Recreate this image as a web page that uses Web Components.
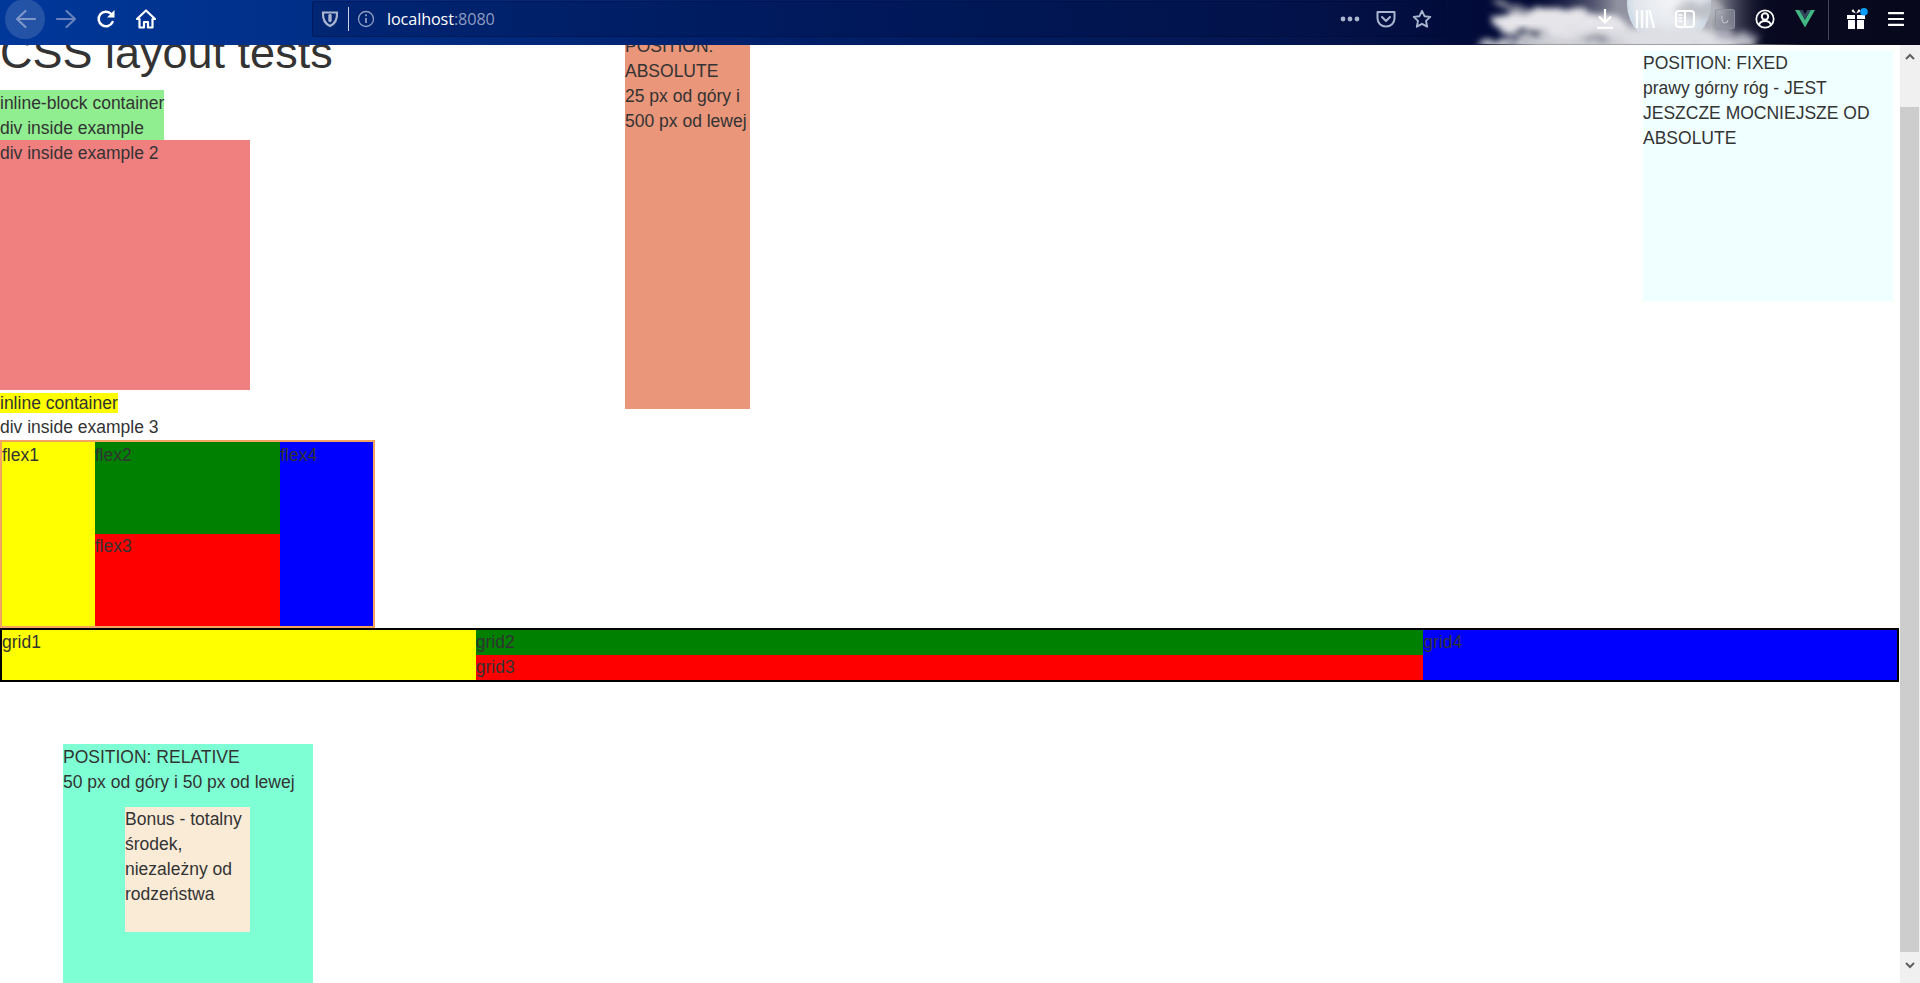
<!DOCTYPE html>
<html lang="pl">
<head>
<meta charset="utf-8">
<title>CSS layout tests</title>
<style>
  html, body { margin: 0; height: 100%; overflow: hidden; background: #fff; }
  body { font-family: "Liberation Sans", Arial, sans-serif; font-size: 17.5px; line-height: 25px; color: #333; }
</style>
</head>
<body>
<browser-window>
  <browser-toolbar></browser-toolbar>
  <page-view>
    <h1 slot="title">CSS layout tests</h1>
    <block-examples></block-examples>
    <flex-example></flex-example>
    <grid-example></grid-example>
    <relative-example></relative-example>
    <pos-box left="625" top="-11" width="125" height="375" color="#e9967a">POSITION: ABSOLUTE<br>25 px od góry i 500 px od lewej</pos-box>
    <pos-box right="7" top="6" width="250" height="250" color="#f0ffff">POSITION: FIXED<br>prawy górny róg - JEST JESZCZE MOCNIEJSZE OD ABSOLUTE</pos-box>
  </page-view>
</browser-window>

<script>
class BrowserWindow extends HTMLElement {
  constructor() {
    super();
    this.attachShadow({ mode: "open" }).innerHTML = `
      <style>
        :host { display: flex; flex-direction: column; height: 983px; overflow: hidden; }
      </style>
      <slot></slot>
    `;
  }
}

class ToolButton extends HTMLElement {
  constructor() {
    super();
    this.attachShadow({ mode: "open" }).innerHTML = `
      <style>
        :host { display: flex; align-items: center; justify-content: center; width: 40px; height: 38px; flex: none; }
        ::slotted(svg) { display: block; }
      </style>
      <slot></slot>
    `;
  }
}

class AddressBar extends HTMLElement {
  constructor() {
    super();
    this.attachShadow({ mode: "open" }).innerHTML = `
      <style>
        :host { display: flex; align-items: center; width: 1133px; height: 36px; margin: 1px 0 0 0; box-sizing: border-box;
          padding: 0 12px 0 7px; background: rgba(0, 10, 60, .25); border: 1px solid rgba(0, 10, 50, .35); border-radius: 2px;
          font: 16.2px/36px "Open Sans", sans-serif; letter-spacing: -.1px; color: #fff; }
        .sep { width: 1px; height: 24px; background: #c9d3e6; margin: 0 8px 0 8px; }
        .url { margin-left: 12px; flex: 1; }
        .port { color: #8d9cc0; }
        .actions { display: flex; align-items: center; gap: 16px; }
        svg { display: block; }
      </style>
      <svg width="20" height="20" viewBox="0 0 20 20" fill="none" stroke="#a9b5cf" stroke-width="2.2"><path d="M3 3.500c4.500 0 9.500 0 14 0 .4 6.500-1.500 11-7 13.500C4.500 14.500 2.600 10 3 3.500z"/><path d="M10 6.500v5" stroke-width="3.400" stroke-linecap="round"/></svg>
      <div class="sep"></div>
      <svg width="18" height="18" viewBox="0 0 18 18" fill="none" stroke="#8d9cc0" stroke-width="1.300"><circle cx="9" cy="9" r="7.500"/><path d="M9 8v5" stroke-width="1.800"/><circle cx="9" cy="5.300" r="1.100" fill="#8d9cc0" stroke="none"/></svg>
      <div class="url">localhost<span class="port">:8080</span></div>
      <div class="actions">
        <svg width="20" height="6" viewBox="0 0 20 6" fill="#a9b5cf"><circle cx="3" cy="3" r="2.400"/><circle cx="10" cy="3" r="2.400"/><circle cx="17" cy="3" r="2.400"/></svg>
        <svg width="20" height="20" viewBox="0 0 20 20" fill="none" stroke="#a9b5cf" stroke-width="2"><path d="M1.500 3h17v6.500a8.500 8 0 0 1-17 0z" stroke-linejoin="round"/><path d="M6 8l4 4 4-4" stroke-linecap="round" stroke-linejoin="round"/></svg>
        <svg width="20" height="20" viewBox="0 0 20 20" fill="none" stroke="#a9b5cf" stroke-width="1.900" stroke-linejoin="round"><path d="M10 1.800l2.500 5.400 5.800.7-4.300 4 1.200 5.800-5.200-2.900-5.200 2.900 1.200-5.800-4.300-4 5.800-.7z"/></svg>
      </div>
    `;
  }
}

class BrowserToolbar extends HTMLElement {
  constructor() {
    super();
    this.attachShadow({ mode: "open" }).innerHTML = `
      <style>
        :host { display: block; position: relative; flex: none; height: 45px; overflow: hidden;
          background: linear-gradient(90deg, #00389a 0, #002f88 300px, #001f68 800px, #04154e 1300px, #020b38 1480px, #08081f 1800px, #08081c 100%); }
        .sky { position: absolute; left: 1460px; top: 0; }
        .row { position: relative; display: flex; height: 44px; padding-left: 6px; box-sizing: border-box; }
        .nav { display: flex; width: 306px; flex: none; }
        .right { display: flex; margin-left: auto; padding-right: 4px; }
        .divider { width: 1px; height: 40px; background: rgba(255, 255, 255, .25); margin: 0 7px 0 3px; flex: none; }
        .back { position: relative; }
        .back::before { content: ""; position: absolute; left: -1px; top: -1px; width: 40px; height: 40px; border-radius: 50%; background: rgba(255, 255, 255, .14); }
        .back svg { position: relative; }
        .line { position: absolute; left: 1470px; width: 340px; bottom: 0; height: 1px; background: linear-gradient(90deg, transparent, #a0a0a6 20%, #a0a0a6 75%, transparent); }
      </style>
      <svg class="sky" width="340" height="44" viewBox="0 0 340 44">
        <defs>
          <filter id="puff" x="-30%" y="-60%" width="160%" height="220%">
            <feTurbulence type="fractalNoise" baseFrequency=".07 .13" numOctaves="4" seed="7"/>
            <feDisplacementMap in="SourceGraphic" scale="18"/>
            <feGaussianBlur stdDeviation="3"/>
          </filter>
          <radialGradient id="moon" cx=".5" cy=".45" r=".55">
            <stop offset="0" stop-color="#f2f3f5"/><stop offset=".75" stop-color="#e2e6ec"/><stop offset="1" stop-color="#c4d4e4"/>
          </radialGradient>
          <linearGradient id="fade" x1="0" x2="340" y1="0" y2="0" gradientUnits="userSpaceOnUse">
            <stop offset=".2" stop-color="#10163f" stop-opacity="0"/>
            <stop offset=".46" stop-color="#8f909f"/>
            <stop offset=".74" stop-color="#aaabb3"/>
            <stop offset=".92" stop-color="#0a0a22" stop-opacity="0"/>
          </linearGradient>
        </defs>
        <rect x="0" y="0" width="340" height="44" fill="url(#fade)"/>
        <circle cx="209" cy="4" r="42" fill="url(#moon)"/>
        <g filter="url(#puff)">
          <ellipse cx="62" cy="10" rx="32" ry="5" fill="#a0a1ad" opacity=".8" transform="rotate(18 62 10)"/>
          <ellipse cx="100" cy="24" rx="66" ry="14" fill="#e6e6ea"/>
          <ellipse cx="165" cy="37" rx="62" ry="11" fill="#dcdce2"/>
          <ellipse cx="130" cy="44" rx="115" ry="8" fill="#cfd0d6"/>
          <ellipse cx="228" cy="40" rx="66" ry="12" fill="#dedfe4"/>
          <ellipse cx="240" cy="10" rx="24" ry="10" fill="#b8b9c1" opacity=".8"/>
          <ellipse cx="276" cy="36" rx="24" ry="6" fill="#85869a" opacity=".6"/>
        </g>
        <g filter="url(#puff)">
          <ellipse cx="72" cy="34" rx="16" ry="3" fill="#2a2e48"/>
          <ellipse cx="135" cy="39" rx="14" ry="3" fill="#8a8b98"/>
        </g>
      </svg>
      <div class="line"></div>
      <div class="row">
        <div class="nav">
          <tool-button class="back"><svg width="22" height="22" viewBox="0 0 22 22" fill="none" stroke="#7f96c8" stroke-width="2.200" stroke-linecap="round" stroke-linejoin="round"><path d="M20 11H2M10.500 3 2 11l8.500 8"/></svg></tool-button>
          <tool-button><svg width="22" height="22" viewBox="0 0 22 22" fill="none" stroke="#6781bb" stroke-width="2.200" stroke-linecap="round" stroke-linejoin="round"><path d="M2 11h18M11.500 3 20 11l-8.500 8"/></svg></tool-button>
          <tool-button><svg width="20" height="20" viewBox="0 0 20 20" fill="none" stroke="#fff" stroke-width="2.500"><path d="M16.600 13a7.300 7.300 0 1 1-1.300-8" stroke-linecap="round"/><path d="M18.500 1v7.500H11z" fill="#fff" stroke="none"/></svg></tool-button>
          <tool-button><svg width="20" height="20" viewBox="0 0 20 20" fill="none" stroke="#fff" stroke-width="2.200" stroke-linejoin="round"><path d="M1 10 10 1.500 19 10h-2.500v8.500h-4.500v-5.500h-4v5.500H3.500V10z"/></svg></tool-button>
        </div>
        <address-bar></address-bar>
        <div class="right">
          <tool-button><svg width="18" height="20" viewBox="0 0 18 20" fill="none" stroke="#fff" stroke-width="2.200"><path d="M9 0v13M3 7.500l6 6 6-6"/><path d="M1 18.800h16"/></svg></tool-button>
          <tool-button><svg width="20" height="18" viewBox="0 0 20 18" fill="none" stroke="#fff" stroke-width="2.300"><path d="M2 0v18M7 0v18M12 0v18M14.500 0l4.500 18" stroke-opacity=".92"/></svg></tool-button>
          <tool-button><svg width="20" height="18" viewBox="0 0 20 18" fill="none" stroke="#fff" stroke-width="2"><rect x="1" y="1" width="18" height="16" rx="3"/><path d="M10 1v16"/><path d="M3.500 5h4M3.500 8h4M3.500 11h4" stroke-width="1.500"/></svg></tool-button>
          <tool-button><svg width="20" height="20" viewBox="0 0 20 20" fill="#a0a2ad" fill-opacity=".55" stroke="#8f93a0" stroke-width="1"><rect x=".5" y=".5" width="19" height="19" rx="2"/><path d="M7 7v4a3 3 0 0 0 6 0" fill="none" stroke="#c8c9d0"/></svg></tool-button>
          <tool-button><svg width="20" height="20" viewBox="0 0 20 20" fill="none" stroke="#fff" stroke-width="1.700"><circle cx="10" cy="10" r="8.700"/><circle cx="10" cy="7.500" r="3.200" stroke-width="2"/><path d="M4 16c1-3.500 3-4 6-4s5 .5 6 4" stroke-width="2"/></svg></tool-button>
          <tool-button><svg width="20" height="18" viewBox="0 0 20 18"><path d="M0 0h4.400L10 9.800 15.600 0H20L10 17.500z" fill="#41b883"/><path d="M4.400 0h3.200L10 4.200 12.400 0h3.200L10 9.800z" fill="#35495e"/></svg></tool-button>
          <div class="divider"></div>
          <tool-button><svg width="24" height="22" viewBox="0 0 24 22" fill="#fff"><path d="M3 7h8v4H3zM13 7h8v4h-8zM4 12h7v9H4zM13 12h7v9h-7z"/><path d="M11.800 6 8.500 4.500c-1.500-1-.6-3 1-2.500zM12.200 6l3.300-1.500c1.500-1 .6-3-1-2.500z" transform="translate(0 -.5)"/><circle cx="20" cy="3.800" r="3.800" fill="#0a9dff"/></svg></tool-button>
          <tool-button><svg width="16" height="14" viewBox="0 0 16 14" fill="#fff"><rect width="16" height="2.200" rx=".6"/><rect y="5.900" width="16" height="2.200" rx=".6"/><rect y="11.800" width="16" height="2.200" rx=".6"/></svg></tool-button>
        </div>
      </div>
    `;
  }
}

class PageView extends HTMLElement {
  constructor() {
    super();
    this.attachShadow({ mode: "open" }).innerHTML = `
      <style>
        :host { display: flex; flex: 1; min-height: 0; }
        .doc { position: relative; flex: 1; min-width: 0; overflow: hidden; background: #fff; }
        ::slotted(h1) { margin: -21px 0 0; height: 66px; font-size: 45px; line-height: 57px; font-weight: 400; color: #333; white-space: nowrap; }
      </style>
      <div class="doc">
        <slot name="title"></slot>
        <slot></slot>
      </div>
      <fake-scrollbar></fake-scrollbar>
    `;
  }
}

class FakeScrollbar extends HTMLElement {
  constructor() {
    super();
    this.attachShadow({ mode: "open" }).innerHTML = `
      <style>
        :host { display: flex; flex-direction: column; width: 20px; flex: none; background: #f0f0f0; }
        .btn { height: 17px; display: flex; align-items: center; justify-content: center; padding-top: 3px; }
        .track { flex: 1; display: flex; padding-top: 42px; }
        .thumb { flex: 1; margin-right: 1px; background: #cdcdcd; }
        .end { height: 31px; flex: none; display: flex; align-items: flex-start; justify-content: center; padding-top: 10px; box-sizing: border-box; }
      </style>
      <div class="btn"><svg width="10" height="7" viewBox="0 0 10 7" fill="none" stroke="#606060" stroke-width="2"><path d="M1 6l4-4 4 4"/></svg></div>
      <div class="track"><div class="thumb"></div></div>
      <div class="end"><svg width="10" height="7" viewBox="0 0 10 7" fill="none" stroke="#606060" stroke-width="2"><path d="M1 1l4 4 4-4"/></svg></div>
    `;
  }
}

class BlockExamples extends HTMLElement {
  constructor() {
    super();
    this.attachShadow({ mode: "open" }).innerHTML = `
      <style>
        :host { display: block; }
        .green { width: fit-content; height: 50px; box-sizing: border-box; padding-top: 1px; background: #90ee90; }
        .coral { width: 250px; height: 250px; box-sizing: border-box; padding-top: 1px; background: #f08080; }
        .line { height: 25px; box-sizing: border-box; padding-top: 1px; }
        .inline { background: #ffff00; }
      </style>
      <div class="green">inline-block container<div>div inside example</div></div>
      <div class="coral">div inside example 2</div>
      <div class="line"><span class="inline">inline container</span></div>
      <div>div inside example 3</div>
    `;
  }
}

class FlexExample extends HTMLElement {
  constructor() {
    super();
    this.attachShadow({ mode: "open" }).innerHTML = `
      <style>
        :host { display: flex; width: 375px; height: 188px; box-sizing: border-box; border: 2px solid #f4a460; }
        .side { flex: 1; padding-top: 1px; }
        .mid { flex: 2; display: flex; flex-direction: column; }
        .mid div { flex: 1; }
        .mid .first { padding-top: 1px; margin-bottom: -1px; }
      </style>
      <div class="side" style="background:#ff0">flex1</div>
      <div class="mid">
        <div class="first" style="background:#008000">flex2</div>
        <div style="background:#f00">flex3</div>
      </div>
      <div class="side" style="background:#00f">flex4</div>
    `;
  }
}

class GridExample extends HTMLElement {
  constructor() {
    super();
    this.attachShadow({ mode: "open" }).innerHTML = `
      <style>
        :host { display: grid; grid-template-columns: 1fr 2fr 1fr; grid-template-rows: 25px 25px; width: 1899px; box-sizing: border-box; border: 2px solid #000; }
        .tall { grid-row: span 2; }
      </style>
      <div class="tall" style="background:#ff0">grid1</div>
      <div style="background:#008000">grid2</div>
      <div class="tall" style="background:#00f">grid4</div>
      <div style="background:#f00">grid3</div>
    `;
  }
}

class RelativeExample extends HTMLElement {
  constructor() {
    super();
    this.attachShadow({ mode: "open" }).innerHTML = `
      <style>
        :host { display: block; position: relative; width: 250px; height: 250px; box-sizing: border-box; padding-top: 1px; margin: 62px 0 0 63px; background: #7fffd4; }
        .center { position: absolute; left: 62px; top: 63px; width: 125px; height: 125px; background: #faebd7; }
      </style>
      POSITION: RELATIVE<br>50 px od góry i 50 px od lewej
      <div class="center">Bonus - totalny środek, niezależny od rodzeństwa</div>
    `;
  }
}

class PosBox extends HTMLElement {
  constructor() {
    super();
    this.attachShadow({ mode: "open" }).innerHTML = `
      <style>
        :host { display: block; position: absolute; background: var(--box-color); }
      </style>
      <slot></slot>
    `;
  }

  connectedCallback() {
    for (const side of ["left", "right", "top", "width", "height"]) {
      if (this.hasAttribute(side)) this.style[side] = this.getAttribute(side) + "px";
    }
    this.style.setProperty("--box-color", this.getAttribute("color"));
  }
}

customElements.define("browser-window", BrowserWindow);
customElements.define("tool-button", ToolButton);
customElements.define("address-bar", AddressBar);
customElements.define("browser-toolbar", BrowserToolbar);
customElements.define("fake-scrollbar", FakeScrollbar);
customElements.define("page-view", PageView);
customElements.define("block-examples", BlockExamples);
customElements.define("flex-example", FlexExample);
customElements.define("grid-example", GridExample);
customElements.define("relative-example", RelativeExample);
customElements.define("pos-box", PosBox);
</script>
</body>
</html>
